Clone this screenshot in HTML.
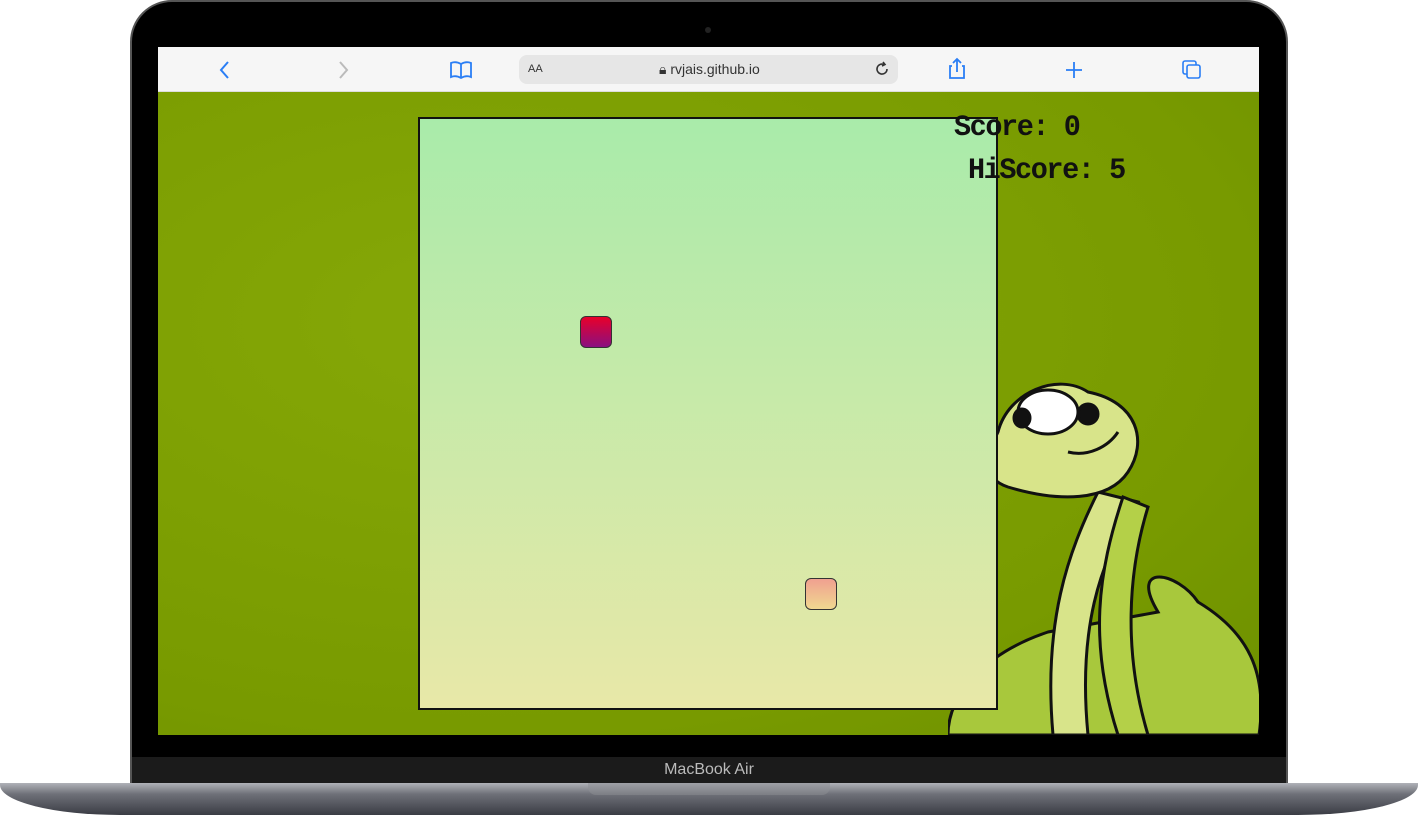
<!DOCTYPE html>
<html><head><style>
*{margin:0;padding:0;box-sizing:border-box}
body{width:1418px;height:815px;background:#fff;position:relative;overflow:hidden;font-family:"Liberation Sans",sans-serif}
.lid{position:absolute;left:130px;top:0;width:1158px;height:790px;background:#000;border-radius:42px 42px 0 0;border:2px solid #555}
.cam{position:absolute;left:705px;top:27px;width:6px;height:6px;border-radius:50%;background:#222}
.screen{position:absolute;left:158px;top:47px;width:1101px;height:688px;background:radial-gradient(ellipse at 30% 40%,#86a807,#789a00 70%,#6d9000);overflow:hidden}
.bar{position:absolute;left:0;top:0;width:1101px;height:45px;background:#f6f6f6;border-bottom:1px solid #ddd}
.url{position:absolute;left:361px;top:8px;width:379px;height:29px;background:#e6e6e6;border-radius:8px}
.board{position:absolute;left:260px;top:70px;width:580px;height:593px;border:2px solid #111;background:linear-gradient(#a9ebaa,#e8e8a8)}
.chin{position:absolute;left:132px;top:757px;width:1154px;height:28px;background:#1b1b1b;color:#bbb;font-size:16px;text-align:center;line-height:26px}
.base{position:absolute;left:0;top:783px;width:1418px;height:32px;background:linear-gradient(#b0b2b8,#6e7078 35%,#3a3c44);border-radius:0 0 120px 120px/0 0 30px 30px}
.notch{position:absolute;left:588px;top:783px;width:242px;height:12px;background:linear-gradient(#9ea0a6,#7c7e84);border-radius:0 0 8px 8px}
.sc{position:absolute;font-family:"Liberation Mono",monospace;font-size:30px;letter-spacing:-1.5px;color:#111;font-weight:bold;transform:scaleX(0.95);transform-origin:left}
</style></head><body>
<div class="lid"></div><div class="cam"></div>
<div class="screen">
<svg style="position:absolute;left:790px;top:325px" width="311" height="363" viewBox="0 0 311 363">
<g stroke="#111" stroke-width="3" fill="#c6dc64">
<path d="M210 240 C180 190,230 200,250 230 C300 260,320 300,311 363 L0 363 C0 320,40 280,100 260 Z" fill="#a8c83c"/>
<path d="M150 120 C120 180,95 250,105 363 L140 363 C130 260,150 190,190 130 Z" fill="#d8e48a"/>
<path d="M175 125 C150 200,140 270,170 363 L200 363 C175 280,180 200,200 135 Z" fill="#b4d048"/>
<path d="M50 60 C60 20,110 0,140 20 C190 30,200 70,180 100 C160 130,110 130,60 115 C30 105,40 80,50 60 Z" fill="#d8e48a"/>
<ellipse cx="100" cy="40" rx="30" ry="22" fill="#fff"/>
<ellipse cx="140" cy="42" rx="10" ry="10" fill="#111"/>
<ellipse cx="74" cy="46" rx="8" ry="9" fill="#111"/>
<path d="M120 80 C140 85,160 75,170 60" fill="none"/>
</g></svg>
<div class="bar">
<svg style="position:absolute;left:60px;top:13px" width="14" height="20"><path d="M10 2 L3 10 L10 18" stroke="#2a7ef5" stroke-width="2" fill="none"/></svg>
<svg style="position:absolute;left:178px;top:13px" width="14" height="20"><path d="M4 2 L11 10 L4 18" stroke="#bbb" stroke-width="2" fill="none"/></svg>
<svg style="position:absolute;left:291px;top:13px" width="24" height="20"><path d="M2 3 Q7 1 12 4 Q17 1 22 3 V17 Q17 15 12 18 Q7 15 2 17 Z M12 4 V18" stroke="#2a7ef5" stroke-width="1.8" fill="none"/></svg>
<div class="url"><span style="position:absolute;left:9px;top:8px;font-size:11px;color:#333">AA</span><span style="position:absolute;left:140px;top:6px;font-size:14px;color:#333">🔒︎ rvjais.github.io</span>
<svg style="position:absolute;left:355px;top:6px" width="16" height="16"><path d="M13 8 A5 5 0 1 1 10 3.5 M9 1 L11 3.5 L8 5" stroke="#333" stroke-width="1.6" fill="none"/></svg></div>
<svg style="position:absolute;left:789px;top:10px" width="20" height="24"><path d="M5 9 H3 V21 H17 V9 H15 M10 15 V2 M6 6 L10 2 L14 6" stroke="#2a7ef5" stroke-width="1.8" fill="none"/></svg>
<svg style="position:absolute;left:907px;top:14px" width="18" height="18"><path d="M9 1 V17 M1 9 H17" stroke="#2a7ef5" stroke-width="1.8"/></svg>
<svg style="position:absolute;left:1023px;top:12px" width="22" height="22"><rect x="2" y="2" width="13" height="13" rx="2" stroke="#2a7ef5" stroke-width="1.6" fill="none"/><rect x="6" y="6" width="13" height="13" rx="2" stroke="#2a7ef5" stroke-width="1.6" fill="#f6f6f6"/></svg>
</div>
<div class="board">
<div style="position:absolute;left:160px;top:197px;width:32px;height:32px;border:1.5px solid #333;border-radius:6px;background:linear-gradient(#e8002a,#8a1080)"></div>
<div style="position:absolute;left:385px;top:459px;width:32px;height:32px;border:1.5px solid #333;border-radius:6px;background:linear-gradient(#f0a090,#f0d890)"></div>
</div>
<div class="sc" style="left:796px;top:64px">Score: 0</div>
<div class="sc" style="left:810px;top:107px">HiScore: 5</div>
</div>
<div class="chin">MacBook Air</div>
<div class="base"></div><div class="notch"></div>
</body></html>
